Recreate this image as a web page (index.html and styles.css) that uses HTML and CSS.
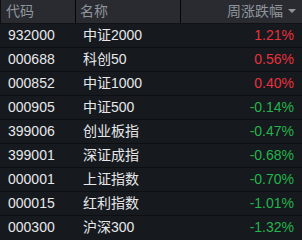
FILE: index.html
```html
<!DOCTYPE html>
<html lang="zh">
<head>
<meta charset="utf-8">
<link rel="stylesheet" href="styles.css">
</head>
<body>
<div class="table">
  <div class="row head">
    <div class="c code">代码</div>
    <div class="c name">名称</div>
    <div class="c chg">周涨跌幅<span class="tri"></span></div>
  </div>
  <div class="row"><div class="c code">932000</div><div class="c name">中证2000</div><div class="c chg up">1.21%</div></div>
  <div class="row"><div class="c code">000688</div><div class="c name">科创50</div><div class="c chg up">0.56%</div></div>
  <div class="row"><div class="c code">000852</div><div class="c name">中证1000</div><div class="c chg up">0.40%</div></div>
  <div class="row"><div class="c code">000905</div><div class="c name">中证500</div><div class="c chg down">-0.14%</div></div>
  <div class="row"><div class="c code">399006</div><div class="c name">创业板指</div><div class="c chg down">-0.47%</div></div>
  <div class="row"><div class="c code">399001</div><div class="c name">深证成指</div><div class="c chg down">-0.68%</div></div>
  <div class="row"><div class="c code">000001</div><div class="c name">上证指数</div><div class="c chg down">-0.70%</div></div>
  <div class="row"><div class="c code">000015</div><div class="c name">红利指数</div><div class="c chg down">-1.01%</div></div>
  <div class="row"><div class="c code">000300</div><div class="c name">沪深300</div><div class="c chg down">-1.32%</div></div>
</div>
</body>
</html>
```
FILE: styles.css
```css
html, body {
  margin: 0;
  padding: 0;
  background: #16191e;
}
body {
  width: 302px;
  height: 240px;
  overflow: hidden;
  font-family: "Liberation Sans", "Noto Sans CJK SC", sans-serif;
  font-size: 14px;
  color: #e6e8ea;
}
.table {
  display: flex;
  flex-direction: column;
}
.row {
  display: grid;
  grid-template-columns: 76px 105px 1fr;
  height: 23px;
  border-bottom: 1px solid #0d0f12;
  align-items: center;
}
.row:last-child {
  border-bottom: none;
}
.c {
  line-height: 23px;
  white-space: nowrap;
}
.code {
  padding-left: 8px;
}
.name {
  padding-left: 7px;
}
.chg {
  text-align: right;
  padding-right: 8px;
}
.head {
  background: #2a2b30;
  color: #8e959d;
  border-bottom: 1px solid #101216;
}
.head .c {
  height: 23px;
}
.head .code {
  padding-left: 6px;
  border-left: 1px solid #0d0e10;
  border-right: 1px solid #050607;
  padding-left: 5px;
}
.head .name {
  border-right: 1px solid #050607;
  padding-left: 4px;
}
.head .chg {
  padding-right: 6px;
  display: flex;
  justify-content: flex-end;
  align-items: center;
}
.tri {
  display: inline-block;
  width: 0;
  height: 0;
  margin-left: 5px;
  margin-top: -2px;
  border-left: 4px solid transparent;
  border-right: 4px solid transparent;
  border-top: 4px solid #8e959d;
}
.up {
  color: #e8313c;
}
.down {
  color: #22b54b;
}
```
